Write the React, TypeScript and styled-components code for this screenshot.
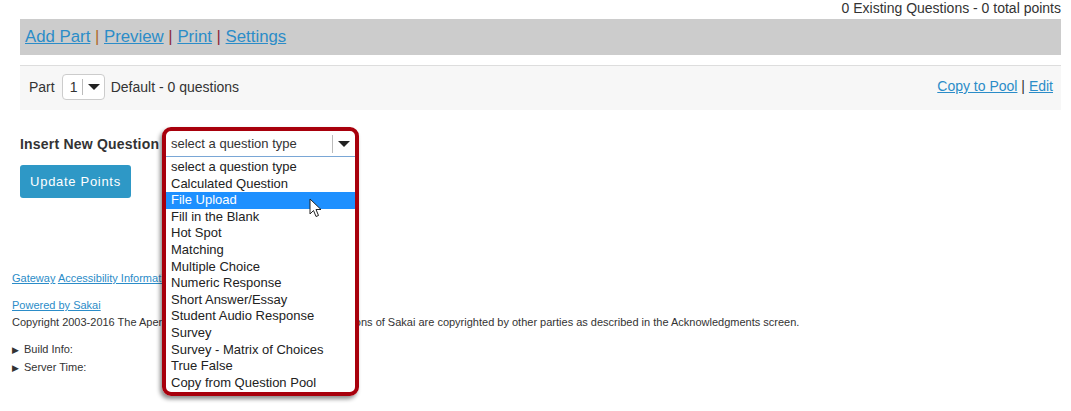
import styled, {createGlobalStyle} from "styled-components";

const GlobalStyle = createGlobalStyle`
    body {
        margin: 0;
        background: #fff;
        font-family: "Liberation Sans", Arial, sans-serif;
        color: #333;
    }
`;

const questionTypes = [
    'select a question type',
    'Calculated Question',
    'File Upload',
    'Fill in the Blank',
    'Hot Spot',
    'Matching',
    'Multiple Choice',
    'Numeric Response',
    'Short Answer/Essay',
    'Student Audio Response',
    'Survey',
    'Survey - Matrix of Choices',
    'True False',
    'Copy from Question Pool',
];

export default function App() {
    return (
        <Page>
            <GlobalStyle/>
            <Summary>0 Existing Questions - 0 total points</Summary>
            <Main>
                <NavBar>
                    <NavLink href="#">Add Part</NavLink>
                    <Sep $color="#b0692b"> | </Sep>
                    <NavLink href="#">Preview</NavLink>
                    <Sep $color="#8c2b3b"> | </Sep>
                    <NavLink href="#">Print</NavLink>
                    <Sep $color="#8c2b3b"> | </Sep>
                    <NavLink href="#">Settings</NavLink>
                </NavBar>
                <PartPanel>
                    <PartLeft>
                        <span>Part</span>
                        <PartSelect>
                            <PartValue>1</PartValue>
                            <Caret $size={5}/>
                        </PartSelect>
                        <span>Default - 0 questions</span>
                    </PartLeft>
                    <PartRight>
                        <SmallLink href="#">Copy to Pool</SmallLink>
                        <span> | </span>
                        <SmallLink href="#">Edit</SmallLink>
                    </PartRight>
                </PartPanel>
                <InsertRow>
                    <InsertLabel>Insert New Question</InsertLabel>
                    <SelectWrap>
                        <TypeSelect>
                            <SelectText>select a question type</SelectText>
                            <SelectArrow><Caret $size={5}/></SelectArrow>
                        </TypeSelect>
                        <OptionList>
                            {questionTypes.map(t => (
                                <Option key={t} $active={t === 'File Upload'}>{t}</Option>
                            ))}
                            <Pointer width="13" height="20" viewBox="0 0 13 20">
                                <path d="M1 1 L1 16 L4.5 12.5 L7 18.5 L9.5 17.5 L7 11.5 L12 11.5 Z"
                                      fill="#fff" stroke="#222" strokeWidth="1" strokeLinejoin="round"/>
                            </Pointer>
                        </OptionList>
                        <Highlight/>
                    </SelectWrap>
                </InsertRow>
                <UpdateButton>Update Points</UpdateButton>
            </Main>
            <Footer>
                <FooterLine>
                    <FooterLink href="#">Gateway</FooterLink> <FooterLink href="#">Accessibility Information</FooterLink>
                </FooterLine>
                <FooterBlock>
                    <FooterLine><FooterLink href="#">Powered by Sakai</FooterLink></FooterLine>
                    <FooterLine>Copyright 2003-2016 The Apereo Foundation. All rights reserved. Portions of Sakai are copyrighted by other parties as described in the Acknowledgments screen.</FooterLine>
                </FooterBlock>
                <FooterBlock>
                    <FooterLine><Tri>&#9654;</Tri>Build Info:</FooterLine>
                    <FooterLine><Tri>&#9654;</Tri>Server Time:</FooterLine>
                </FooterBlock>
            </Footer>
        </Page>
    );
}

const Page = styled.div`
    width: 1071px;
    height: 411px;
    overflow: hidden;
`;

const Summary = styled.div`
    height: 19px;
    line-height: 17px;
    padding-right: 10px;
    text-align: right;
    font-size: 14px;
`;

const Main = styled.div`
    padding: 0 10px 0 20px;
`;

const NavBar = styled.div`
    height: 36px;
    background: #cccccc;
    padding-left: 5px;
    display: flex;
    align-items: center;
    font-size: 16.8px;
    white-space: pre;
`;

const NavLink = styled.a`
    color: #2b8cc8;
    text-decoration: underline;
`;

const Sep = styled.span<{$color: string}>`
    color: ${p => p.$color};
`;

const PartPanel = styled.div`
    margin-top: 10px;
    border-top: 1px solid #dddddd;
    background: #f7f7f7;
    height: 44px;
    padding: 0 8px 0 9px;
    display: flex;
    align-items: center;
    justify-content: space-between;
    font-size: 14px;
`;

const PartLeft = styled.div`
    display: flex;
    align-items: center;
    gap: 6px;
    margin-top: -2px;
`;

const PartSelect = styled.div`
    width: 43px;
    height: 26px;
    box-sizing: border-box;
    border: 1px solid #cccccc;
    border-radius: 4px;
    background: #fff;
    display: flex;
    align-items: center;
    margin-left: 1px;
`;

const PartValue = styled.span`
    width: 20px;
    height: 16px;
    line-height: 16px;
    border-right: 1px solid #bbb;
    box-sizing: border-box;
    padding-left: 7px;
    margin-right: 5px;
`;

const Caret = styled.span<{$size: number}>`
    width: 0;
    height: 0;
    border-left: ${p => p.$size + 1}px solid transparent;
    border-right: ${p => p.$size + 1}px solid transparent;
    border-top: ${p => p.$size + 1}px solid #222;
`;

const PartRight = styled.div`
    white-space: pre;
    margin-top: -4px;
`;

const SmallLink = styled.a`
    color: #2b8cc8;
    text-decoration: underline;
`;

const InsertRow = styled.div`
    margin-top: 21px;
    display: flex;
    align-items: center;
`;

const InsertLabel = styled.div`
    width: 146px;
    font-size: 14px;
    font-weight: bold;
    letter-spacing: 0.2px;
    color: #333;
`;

const SelectWrap = styled.div`
    position: relative;
    width: 189px;
    height: 26px;
`;

const TypeSelect = styled.div`
    height: 26px;
    box-sizing: border-box;
    background: #fff;
    border-bottom: 1px solid #7aa7d6;
    display: flex;
    align-items: center;
    font-size: 13px;
`;

const SelectText = styled.span`
    flex: 1;
    padding-left: 5px;
`;

const SelectArrow = styled.span`
    width: 22px;
    height: 18px;
    border-left: 1px solid #bbb;
    display: flex;
    align-items: center;
    justify-content: center;
`;

const OptionList = styled.div`
    position: absolute;
    top: 27px;
    left: 0;
    width: 189px;
    height: 234px;
    padding-top: 1px;
    box-sizing: border-box;
    background: #fff;
    font-size: 13px;
    z-index: 2;
`;

const Option = styled.div<{$active: boolean}>`
    height: 16.6px;
    line-height: 16.6px;
    padding-left: 5px;
    white-space: nowrap;
    background: ${p => p.$active ? '#1e90ff' : 'transparent'};
    color: ${p => p.$active ? '#fff' : '#222'};
`;

const Pointer = styled.svg`
    position: absolute;
    left: 143px;
    top: 40px;
`;

const Highlight = styled.div`
    position: absolute;
    left: -4px;
    top: -4px;
    width: 197px;
    height: 269px;
    box-sizing: border-box;
    border: 4px solid #a8000c;
    border-radius: 9px;
    box-shadow: -2px 3px 4px rgba(0, 0, 0, 0.45);
    z-index: 3;
    pointer-events: none;
`;

const UpdateButton = styled.button`
    margin-top: 8px;
    width: 111px;
    height: 33px;
    border: none;
    border-radius: 3px;
    background: #2e98c6;
    color: #fff;
    font-family: "Liberation Sans", Arial, sans-serif;
    font-size: 13px;
    letter-spacing: 0.7px;
`;

const Footer = styled.div`
    margin-top: 72px;
    padding-left: 12px;
    font-size: 11px;
    color: #333;
`;

const FooterBlock = styled.div`
    margin-top: 10px;
`;

const FooterLine = styled.div`
    line-height: 17px;
    white-space: nowrap;
`;

const FooterLink = styled.a`
    color: #2b8cc8;
    text-decoration: underline;
`;

const Tri = styled.span`
    display: inline-block;
    width: 12px;
    font-size: 9px;
    color: #333;
`;
